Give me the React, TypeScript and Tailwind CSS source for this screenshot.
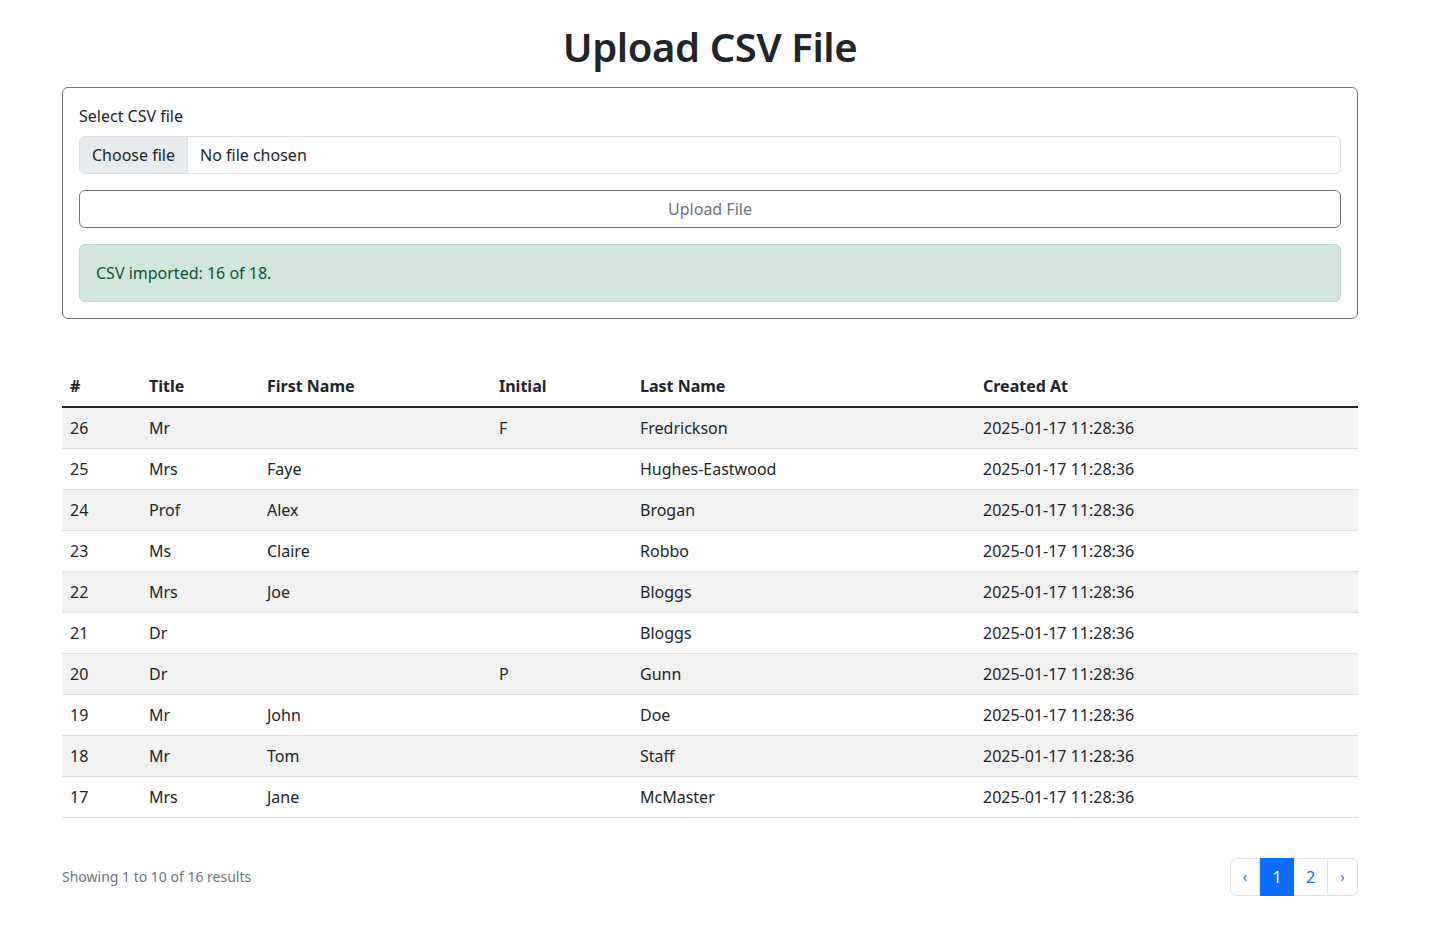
import React from 'react';

type Row = {
  id: number;
  title: string;
  first: string;
  initial: string;
  last: string;
  created: string;
};

const rows: Row[] = [
  { id: 26, title: 'Mr', first: '', initial: 'F', last: 'Fredrickson', created: '2025-01-17 11:28:36' },
  { id: 25, title: 'Mrs', first: 'Faye', initial: '', last: 'Hughes-Eastwood', created: '2025-01-17 11:28:36' },
  { id: 24, title: 'Prof', first: 'Alex', initial: '', last: 'Brogan', created: '2025-01-17 11:28:36' },
  { id: 23, title: 'Ms', first: 'Claire', initial: '', last: 'Robbo', created: '2025-01-17 11:28:36' },
  { id: 22, title: 'Mrs', first: 'Joe', initial: '', last: 'Bloggs', created: '2025-01-17 11:28:36' },
  { id: 21, title: 'Dr', first: '', initial: '', last: 'Bloggs', created: '2025-01-17 11:28:36' },
  { id: 20, title: 'Dr', first: '', initial: 'P', last: 'Gunn', created: '2025-01-17 11:28:36' },
  { id: 19, title: 'Mr', first: 'John', initial: '', last: 'Doe', created: '2025-01-17 11:28:36' },
  { id: 18, title: 'Mr', first: 'Tom', initial: '', last: 'Staff', created: '2025-01-17 11:28:36' },
  { id: 17, title: 'Mrs', first: 'Jane', initial: '', last: 'McMaster', created: '2025-01-17 11:28:36' },
];

const cols = [
  { label: '#', w: 'w-[79px]' },
  { label: 'Title', w: 'w-[118px]' },
  { label: 'First Name', w: 'w-[232px]' },
  { label: 'Initial', w: 'w-[141px]' },
  { label: 'Last Name', w: 'w-[343px]' },
  { label: 'Created At', w: 'w-[383px]' },
];

export default function App() {
  return (
    <div className="min-h-[930px] w-[1420px] bg-white text-[16px] leading-6 text-[#212529] font-['Noto_Sans',sans-serif]">
      <div className="mx-auto w-[1296px] pt-[23px]">
        <h1 className="mb-4 text-center text-[40px] leading-[48px] font-semibold tracking-[-0.4px]">Upload CSV File</h1>

        {/* Upload card */}
        <div className="rounded-md border border-[#6c757d] p-4">
          <label className="mb-2 block">Select CSV file</label>
          <div className="flex h-[38px] overflow-hidden rounded-md border border-[#dee2e6]">
            <div className="flex items-center border-r border-[#dee2e6] bg-[#e9ecef] px-3">Choose file</div>
            <div className="flex items-center px-3">No file chosen</div>
          </div>
          <button className="mt-4 flex h-[38px] w-full items-center justify-center rounded-md border border-[#6c757d] text-[#6c757d]">
            Upload File
          </button>
          <div className="mt-4 rounded-md border border-[#badbcc] bg-[#d1e7dd] p-4 text-[#0f5132]">
            CSV imported: 16 of 18.
          </div>
        </div>

        {/* Table */}
        <table className="mt-[47px] w-full table-fixed border-collapse">
          <thead>
            <tr className="border-b-2 border-[#212529]">
              {cols.map((c) => (
                <th key={c.label} className={`${c.w} px-2 py-2 text-left font-bold`}>
                  {c.label}
                </th>
              ))}
            </tr>
          </thead>
          <tbody>
            {rows.map((r, i) => (
              <tr key={r.id} className={`border-b border-[#dee2e6] ${i % 2 === 0 ? 'bg-[#f2f2f2]' : 'bg-white'}`}>
                <td className="px-2 py-2">{r.id}</td>
                <td className="px-2 py-2">{r.title}</td>
                <td className="px-2 py-2">{r.first}</td>
                <td className="px-2 py-2">{r.initial}</td>
                <td className="px-2 py-2">{r.last}</td>
                <td className="px-2 py-2">{r.created}</td>
              </tr>
            ))}
          </tbody>
        </table>

        {/* Footer */}
        <div className="mt-10 flex items-center justify-between">
          <div className="text-[14px] text-[#6c757d]">Showing 1 to 10 of 16 results</div>
          <div className="flex h-[38px] text-[#0d6efd]">
            <span className="flex w-[30px] items-center justify-center rounded-l-md border border-[#dee2e6] text-[14px]">‹</span>
            <span className="flex w-[34px] items-center justify-center border border-[#0d6efd] bg-[#0d6efd] text-white">1</span>
            <span className="flex w-[33px] items-center justify-center border-y border-[#dee2e6]">2</span>
            <span className="flex w-[31px] items-center justify-center rounded-r-md border border-[#dee2e6] text-[14px]">›</span>
          </div>
        </div>
      </div>
    </div>
  );
}
